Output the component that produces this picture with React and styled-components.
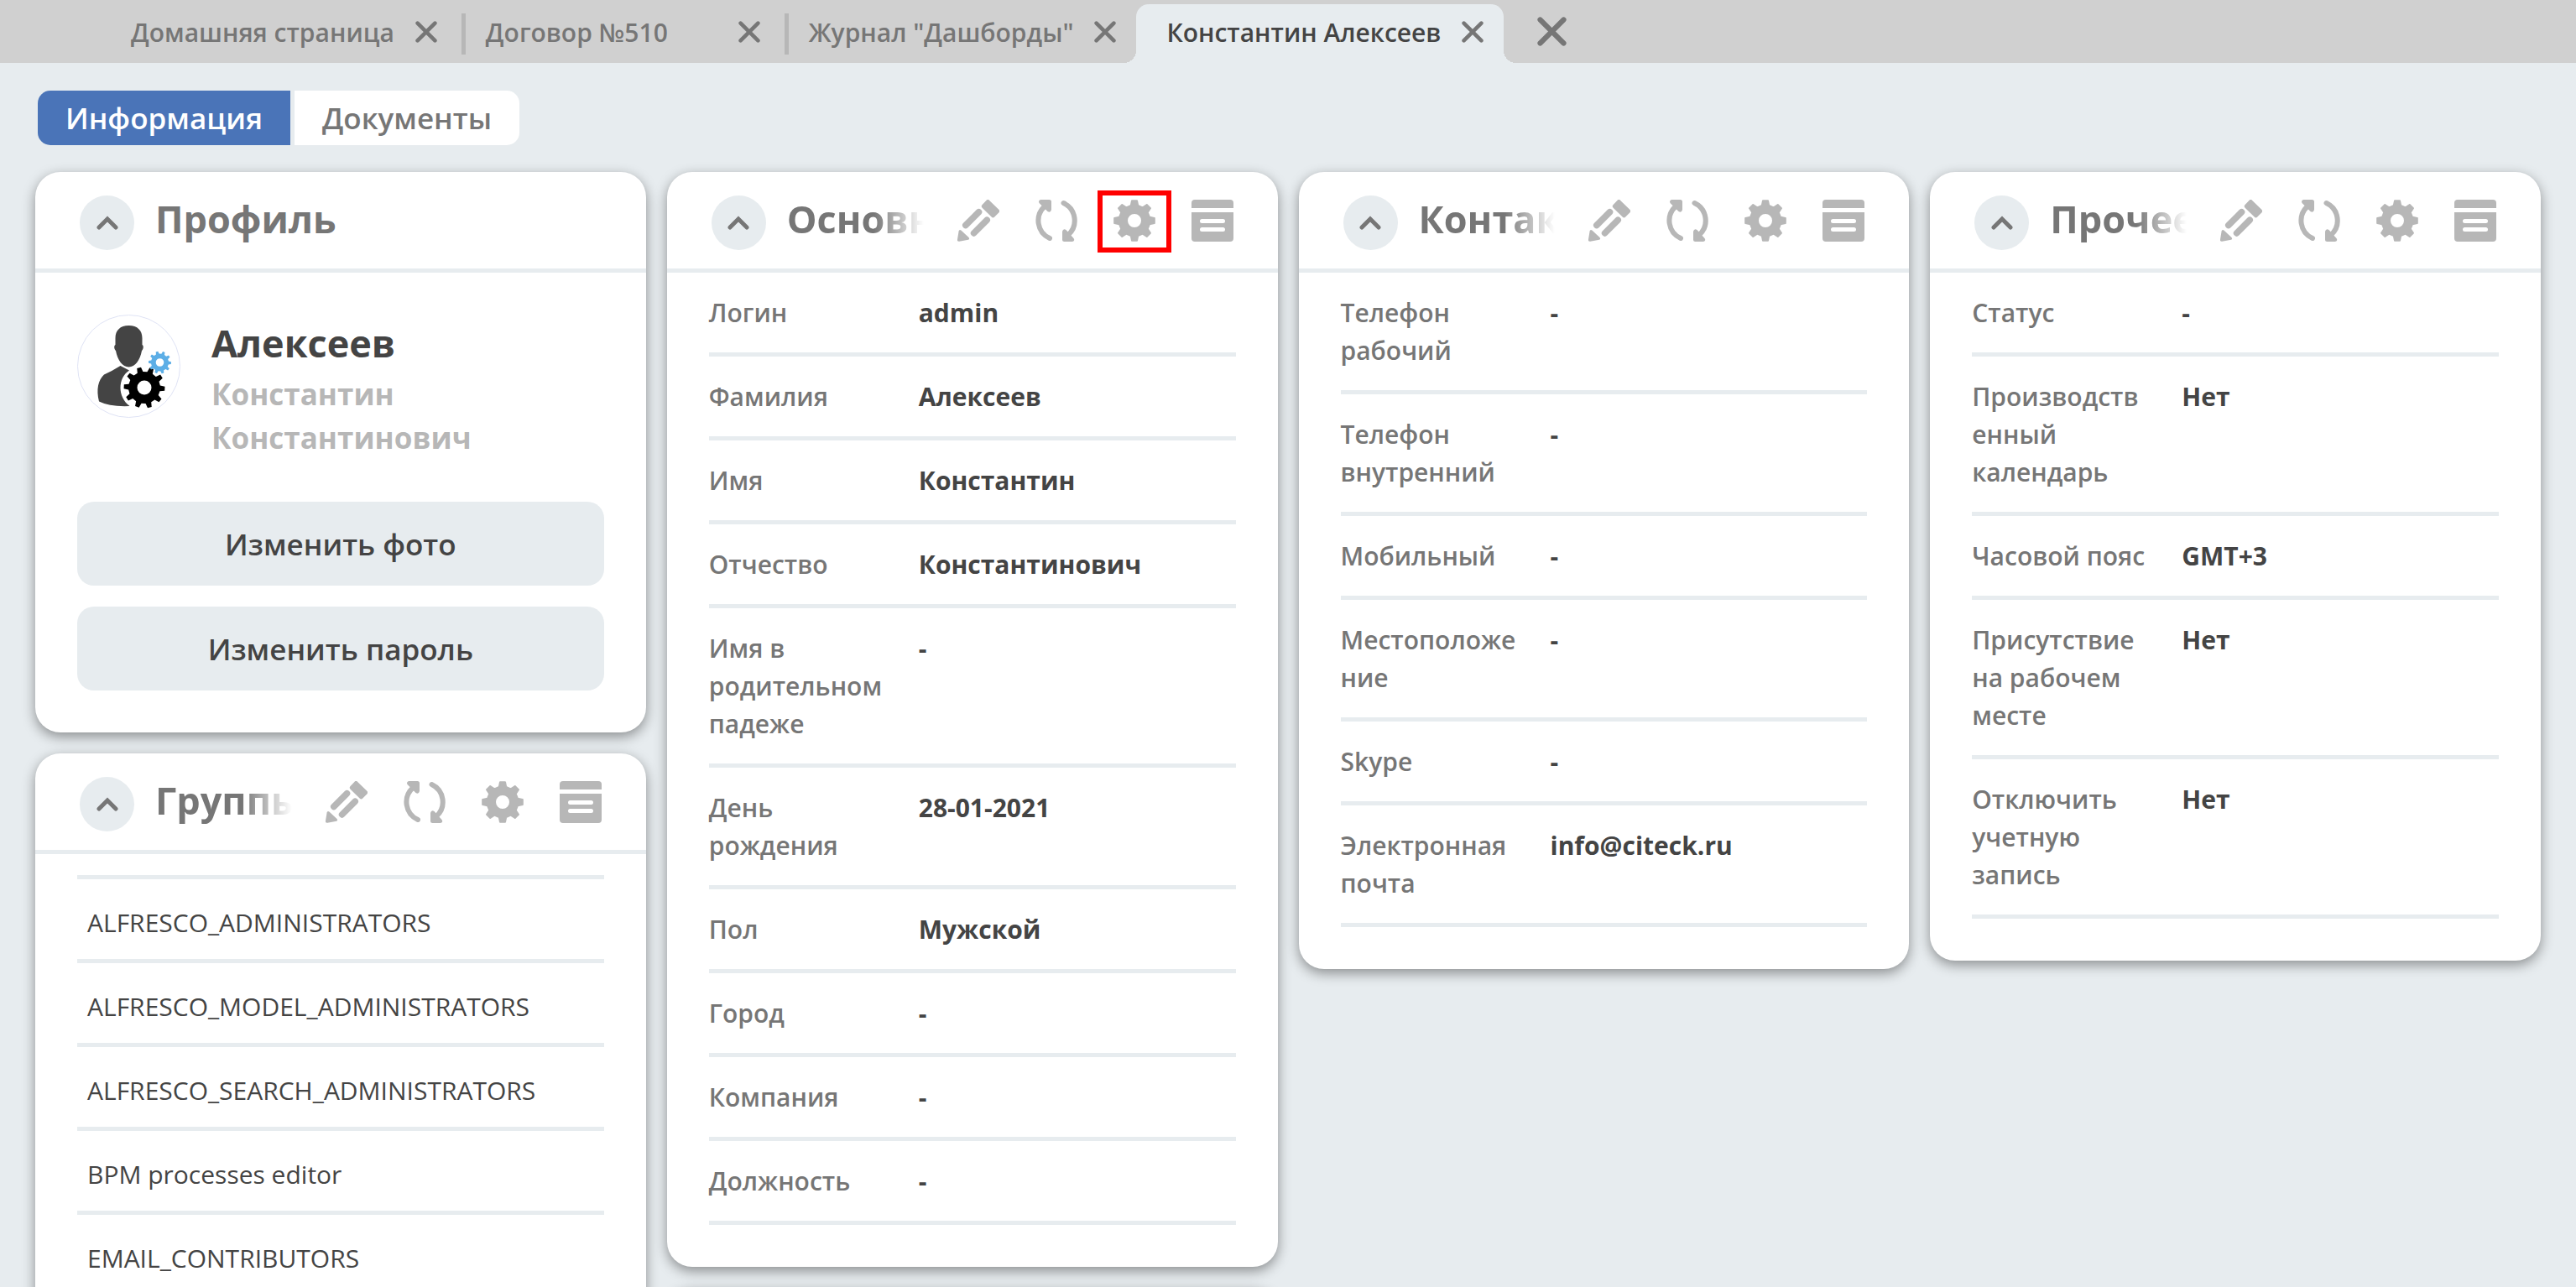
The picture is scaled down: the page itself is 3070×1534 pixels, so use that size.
import React from "react";
import styled, { createGlobalStyle } from "styled-components";

const GlobalStyle = createGlobalStyle`
  *, *::before, *::after { box-sizing: border-box; }
  body {
    margin: 0;
    background: #e7ecef;
    color: #444;
    font-family: "Open Sans", "Noto Sans", sans-serif;
    font-size: 30px;
    line-height: 45px;
  }
  button { font: inherit; color: inherit; border: 0; padding: 0; background: none; cursor: pointer; }
  svg { display: block; }
`;

const Shell = styled.div`
  height: 100vh;
  overflow: hidden;
`;

const TabBar = styled.nav`
  display: flex;
  height: 75px;
  padding: 5px 0 0 132px;
  background: #d0d0d0;
`;

const PageTab = styled.div`
  position: relative;
  display: flex;
  align-items: center;
  justify-content: space-between;
  gap: 25px;
  min-width: 380px;
  padding: 0 ${(p) => (p.$divided ? 29 : 24)}px 4px ${(p) => (p.$active ? 36 : 24)}px;
  background: ${(p) => (p.$active ? "#e7ecef" : "none")};
  border-radius: 15px 15px 0 0;
  color: ${(p) => (p.$active ? "#444" : "#767676")};
  font-weight: 600;

  &::before, &::after {
    content: "";
    display: ${(p) => (p.$active ? "block" : "none")};
    position: absolute;
    bottom: 0;
    width: 15px;
    height: 15px;
  }
  &::before { left: -15px; background: radial-gradient(circle at 0 0, transparent 15px, #e7ecef 15px); }
  &::after { right: -15px; background: radial-gradient(circle at 100% 0, transparent 15px, #e7ecef 15px); }
`;

const Divider = styled.span`
  width: 5px;
  height: 49px;
  margin-top: 11px;
  background: #b7b7b7;
`;

const CloseButton = styled.button`
  color: #767676;
`;

const CloseAll = styled(CloseButton)`
  padding: 0 0 5px 40px;
`;

const Views = styled.div`
  display: flex;
  gap: 5px;
  padding: 33px 45px 32px;
`;

const ViewButton = styled.button`
  height: 65px;
  padding: 0 33px;
  background: ${(p) => (p.$active ? "#4a74b8" : "#fff")};
  color: ${(p) => (p.$active ? "#fff" : "#767676")};
  font-size: 35px;
  font-weight: 600;
  &:first-child { border-radius: 15px 0 0 15px; }
  &:last-child { border-radius: 0 15px 15px 0; }
`;

const Board = styled.main`
  display: grid;
  grid-template-columns: repeat(4, minmax(0, 1fr));
  gap: 25px;
  align-items: start;
  padding: 0 42px;
`;

const Column = styled.div`
  display: grid;
  grid-template-columns: minmax(0, 1fr);
  gap: 25px;
`;

const Card = styled.section`
  min-height: 120px;
  background: #fff;
  border-radius: 30px;
  box-shadow: 0 5px 15px rgba(0, 0, 0, 0.4);
`;

const CardHeader = styled.header`
  display: flex;
  align-items: center;
  height: 120px;
  padding: 0 53px;
  border-bottom: 5px solid #e7ecef;
`;

const Collapse = styled.button`
  display: grid;
  place-items: center;
  flex: none;
  width: 65px;
  height: 65px;
  margin: 6px 25px 0 0;
  border-radius: 50%;
  background: #e7ecef;
  color: #767676;
`;

const Title = styled.h2`
  flex: 1;
  min-width: 0;
  margin: 0;
  padding-bottom: 4px;
  overflow: hidden;
  white-space: nowrap;
  color: #767676;
  font-size: 45px;
  line-height: 65px;
  font-weight: 700;
  mask-image: ${(p) => (p.$fade ? "linear-gradient(to right, #000 calc(100% - 60px), transparent)" : "none")};
`;

const Tools = styled.div`
  display: flex;
  gap: 43px;
  margin-left: 40px;
`;

const Tool = styled.button`
  position: relative;
  color: #b7b7b7;
`;

const Marker = styled.span`
  position: absolute;
  inset: -11px -19px -13px;
  border: 6px solid #f00;
`;

const CardBody = styled.div`
  padding: 0 50px 50px;
`;

const Fields = styled.dl`
  margin: 0;
`;

const Field = styled.div`
  display: grid;
  grid-template-columns: 212px 1fr;
  column-gap: 38px;
  padding: 25px 0;
  border-bottom: 5px solid #e7ecef;
`;

const Label = styled.dt`
  color: #767676;
  font-weight: 600;
  overflow-wrap: anywhere;
`;

const Value = styled.dd`
  margin: 0;
  font-weight: 700;
`;

const Person = styled.div`
  display: flex;
  gap: 37px;
  padding: 50px 0;
`;

const PersonNames = styled.div`
  padding-top: 4px;
  color: #b7b7b7;
  font-size: 35px;
  line-height: 52px;
  font-weight: 700;
`;

const Surname = styled.div`
  margin-bottom: 5px;
  color: #444;
  font-size: 45px;
  line-height: 60px;
`;

const Actions = styled.div`
  display: grid;
  gap: 25px;
`;

const ActionButton = styled.button`
  height: 100px;
  border-radius: 20px;
  background: #e7ecef;
  font-size: 35px;
  font-weight: 600;
`;

const Groups = styled.ul`
  margin: 25px 0 0;
  padding: 0;
  list-style: none;
  border-top: 5px solid #e7ecef;
`;

const Group = styled.li`
  padding: 29px 12px 21px;
  border-bottom: 5px solid #e7ecef;
`;

const CloseIcon = ({ size }) => (
  <svg width={size} height={size} viewBox="0 0 26 26" fill="none" stroke="currentColor" strokeWidth="4.6" strokeLinecap="round">
    <path d="M2.6 2.6 23.4 23.4M23.4 2.6 2.6 23.4" />
  </svg>
);

const ChevronIcon = () => (
  <svg width="26" height="17" viewBox="0 0 26 17" fill="none" stroke="currentColor" strokeWidth="5" strokeLinecap="round">
    <path d="M3 14 13 4 23 14" />
  </svg>
);

const PencilIcon = () => (
  <svg width="50" height="50" viewBox="0 0 50 50" fill="currentColor">
    <path d="M34.4 0.9 29.6 6a2.6 2.6 0 0 0 0 3.7l11 10.8a2.6 2.6 0 0 0 3.7 0l5-5a2.6 2.6 0 0 0 0-3.7L38.2 0.9a2.6 2.6 0 0 0-3.8 0Z" />
    <path d="M1.6 37.5 0 47.6Q-0.2 50 2.3 49.8L13 47.8Q15 47 13.5 45L4.4 36.4Q2.2 35 1.6 37.5Z" />
    <path d="M9.8 30.5 25.5 14.8M19.6 39.9 35.2 24.3" fill="none" stroke="currentColor" strokeWidth="7.6" strokeLinecap="round" />
  </svg>
);

const RefreshIcon = () => (
  <svg width="50" height="50" viewBox="0 0 50 50" fill="currentColor">
    <path d="M17 46A23 23 0 0 1 11 8M33.5 4A23 23 0 0 1 39 42" fill="none" stroke="currentColor" strokeWidth="6" strokeLinecap="round" />
    <path d="M6 0H16.5Q19 0 19 2.5V12Q18 16 14.5 14L4.5 4Q3 1 6 0ZM44 50H34.5Q32 50 32 47.5V38Q33 34 36.5 36L45.5 46Q47.5 49 44 50Z" />
  </svg>
);

const gearPath = (cx, cy, outer, inner, hole, teeth, turn = 0) => {
  const step = (Math.PI * 2) / teeth;
  const at = (r, a) => `${(cx + r * Math.cos(a)).toFixed(2)} ${(cy + r * Math.sin(a)).toFixed(2)}`;
  let d = "";
  for (let i = 0; i < teeth; i += 1) {
    const a = i * step + turn;
    d += `${i ? "L" : "M"}${at(inner, a - step * 0.29)}L${at(outer, a - step * 0.16)}L${at(outer, a + step * 0.16)}L${at(inner, a + step * 0.29)}`;
  }
  return `${d}ZM${cx - hole} ${cy}a${hole} ${hole} 0 1 0 ${hole * 2} 0a${hole} ${hole} 0 1 0 ${-hole * 2} 0Z`;
};

const GearIcon = () => (
  <svg width="50" height="50" viewBox="0 0 50 50" fill="currentColor" stroke="currentColor" strokeWidth="2" strokeLinejoin="round" fillRule="evenodd">
    <path d={gearPath(25, 25, 24, 18.5, 9, 8)} />
  </svg>
);

const ListIcon = () => (
  <svg width="50" height="50" viewBox="0 0 50 50" fill="currentColor" fillRule="evenodd">
    <path d="M4 0H46Q50 0 50 4V10H0V4Q0 0 4 0Z" />
    <path d="M0 15H50V46Q50 50 46 50H4Q0 50 0 46ZM12.5 23a2.5 2.5 0 0 0 0 5h25a2.5 2.5 0 0 0 0-5ZM12.5 33a2.5 2.5 0 0 0 0 5h25a2.5 2.5 0 0 0 0-5Z" />
  </svg>
);

const Avatar = () => (
  <svg width="123" height="123" viewBox="0 0 123 123" role="img" aria-label="Фото профиля">
    <circle cx="61.5" cy="61.5" r="61" fill="#fff" stroke="#dfe3f5" />
    <path d="M61.5 13C51 13 45.5 19 45.5 28V36C43.5 37 44 41 46 43C48 54 54 62.5 61.5 62.5S75 54 77 43C79 41 79.5 37 77.5 36V28C77.5 19 72 13 61.5 13Z" fill="#444" />
    <path d="M51.5 61 62 66.5C48 76 48 98 62.5 109Q39 110 26 103.5C22.5 89 25 78 32 71.5Q42 67 51.5 61Z" fill="#444" />
    <path d={gearPath(80, 87, 24.5, 19, 8.5, 10, 0.05)} fill="#000" fillRule="evenodd" />
    <path d={gearPath(98.5, 57, 13.5, 10.5, 4.8, 10, 0.05)} fill="#5caee6" fillRule="evenodd" />
  </svg>
);

const tabs = [
  { title: "Домашняя страница", divider: true },
  { title: "Договор №510", divider: true },
  { title: 'Журнал "Дашборды"' },
  { title: "Константин Алексеев", active: true },
];

const mainFields = [
  ["Логин", "admin"],
  ["Фамилия", "Алексеев"],
  ["Имя", "Константин"],
  ["Отчество", "Константинович"],
  ["Имя в родительном падеже", "-"],
  ["День рождения", "28-01-2021"],
  ["Пол", "Мужской"],
  ["Город", "-"],
  ["Компания", "-"],
  ["Должность", "-"],
];

const contactFields = [
  ["Телефон рабочий", "-"],
  ["Телефон внутренний", "-"],
  ["Мобильный", "-"],
  ["Местоположение", "-"],
  ["Skype", "-"],
  ["Электронная почта", "info@citeck.ru"],
];

const otherFields = [
  ["Статус", "-"],
  ["Производственный календарь", "Нет"],
  ["Часовой пояс", "GMT+3"],
  ["Присутствие на рабочем месте", "Нет"],
  ["Отключить учетную запись", "Нет"],
];

const groups = [
  "ALFRESCO_ADMINISTRATORS",
  "ALFRESCO_MODEL_ADMINISTRATORS",
  "ALFRESCO_SEARCH_ADMINISTRATORS",
  "BPM processes editor",
  "EMAIL_CONTRIBUTORS",
];

function Widget({ title, tools = true, marked = false, children }) {
  return (
    <Card>
      <CardHeader>
        <Collapse aria-label="Свернуть"><ChevronIcon /></Collapse>
        <Title $fade={tools}>{title}</Title>
        {tools && (
          <Tools>
            <Tool aria-label="Редактировать"><PencilIcon /></Tool>
            <Tool aria-label="Обновить"><RefreshIcon /></Tool>
            <Tool aria-label="Настроить"><GearIcon />{marked && <Marker />}</Tool>
            <Tool aria-label="Форма"><ListIcon /></Tool>
          </Tools>
        )}
      </CardHeader>
      <CardBody>{children}</CardBody>
    </Card>
  );
}

function FieldList({ items }) {
  return (
    <Fields>
      {items.map(([label, value]) => (
        <Field key={label}>
          <Label>{label}</Label>
          <Value>{value}</Value>
        </Field>
      ))}
    </Fields>
  );
}

export default function App() {
  return (
    <Shell>
      <GlobalStyle />
      <TabBar>
        {tabs.map((tab) => (
          <React.Fragment key={tab.title}>
            <PageTab $active={tab.active} $divided={tab.divider}>
              {tab.title}
              <CloseButton aria-label="Закрыть вкладку"><CloseIcon size={26} /></CloseButton>
            </PageTab>
            {tab.divider && <Divider />}
          </React.Fragment>
        ))}
        <CloseAll aria-label="Закрыть все вкладки"><CloseIcon size={35} /></CloseAll>
      </TabBar>
      <Views>
        <ViewButton $active>Информация</ViewButton>
        <ViewButton>Документы</ViewButton>
      </Views>
      <Board>
        <Column>
          <Widget title="Профиль" tools={false}>
            <Person>
              <Avatar />
              <PersonNames>
                <Surname>Алексеев</Surname>
                Константин<br />Константинович
              </PersonNames>
            </Person>
            <Actions>
              <ActionButton>Изменить фото</ActionButton>
              <ActionButton>Изменить пароль</ActionButton>
            </Actions>
          </Widget>
          <Widget title="Группы">
            <Groups>
              {groups.map((name) => <Group key={name}>{name}</Group>)}
            </Groups>
          </Widget>
        </Column>
        <Column>
          <Widget title="Основное" marked><FieldList items={mainFields} /></Widget>
          <Card />
        </Column>
        <Column>
          <Widget title="Контакты"><FieldList items={contactFields} /></Widget>
        </Column>
        <Column>
          <Widget title="Прочее"><FieldList items={otherFields} /></Widget>
        </Column>
      </Board>
    </Shell>
  );
}
